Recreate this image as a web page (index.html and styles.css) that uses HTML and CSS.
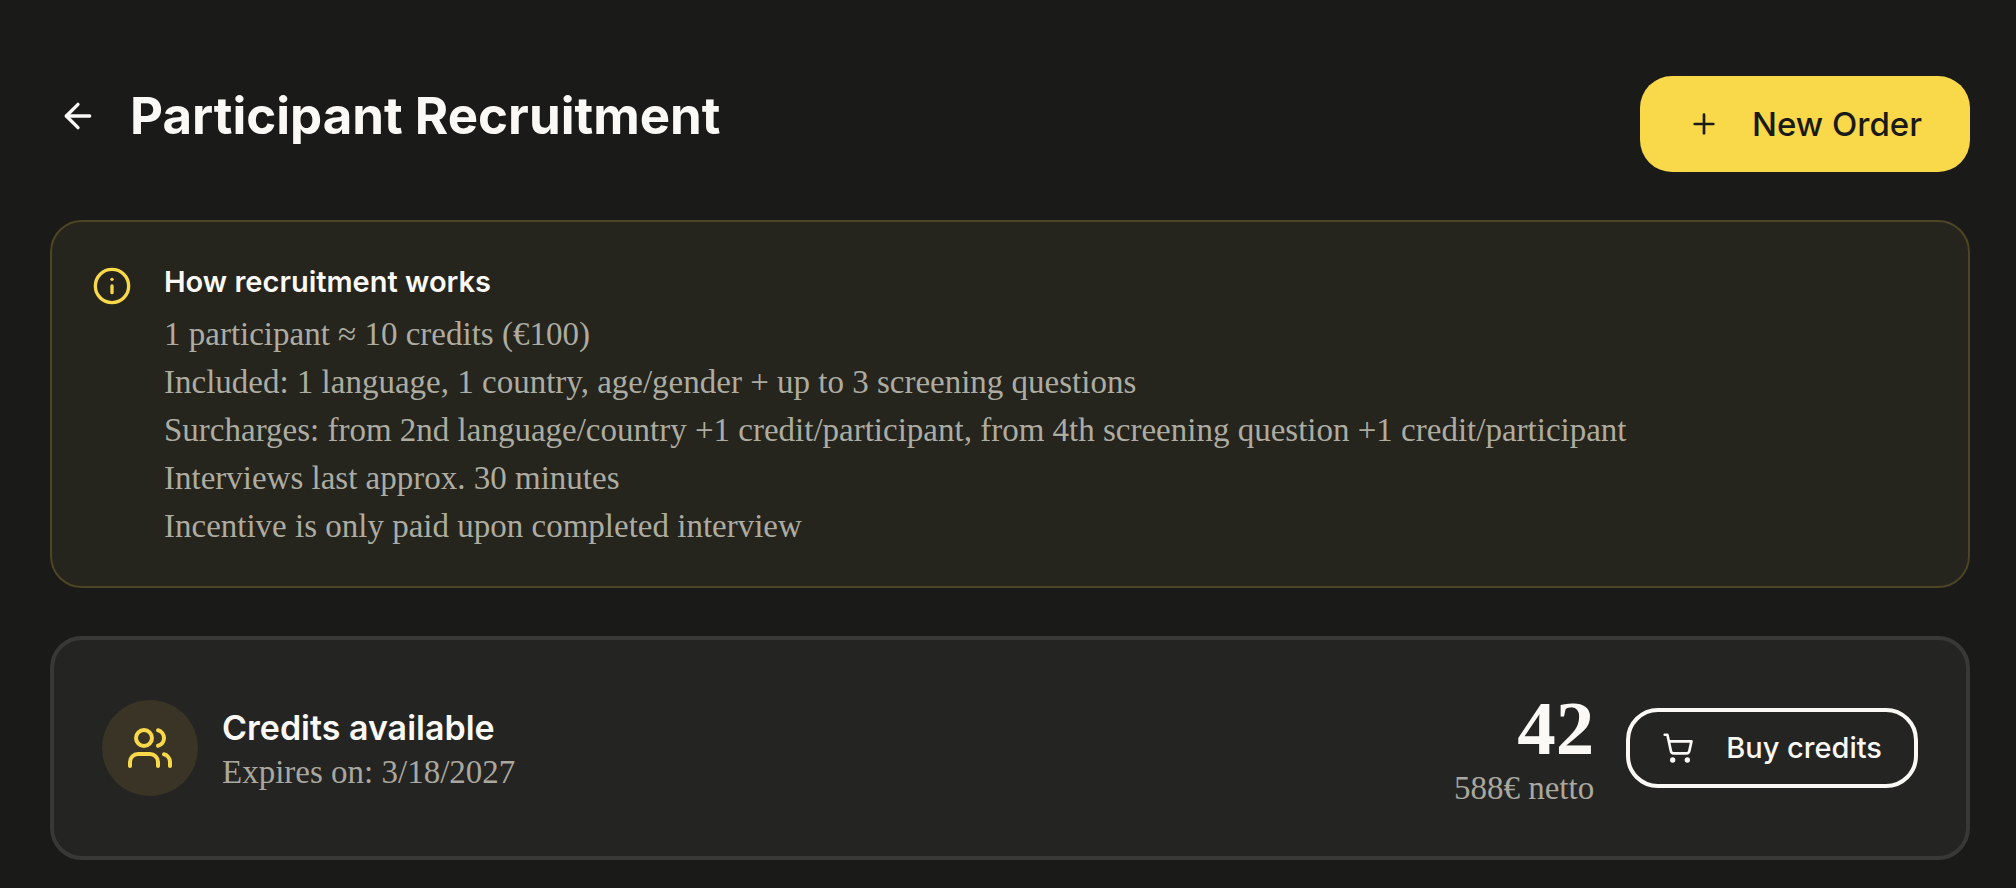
FILE: index.html
```html
<!DOCTYPE html>
<html lang="en">
<head>
<meta charset="utf-8">
<title>Participant Recruitment</title>
<link rel="stylesheet" href="styles.css">
</head>
<body>
<main class="page">
  <header class="page-header">
    <div class="page-heading">
      <button class="back-button" type="button" aria-label="Back">
        <svg class="icon icon-lg" viewBox="0 0 24 24" aria-hidden="true"><path d="m12 19-7-7 7-7"/><path d="M19 12H5"/></svg>
      </button>
      <h1 class="page-title">Participant Recruitment</h1>
    </div>
    <button class="button button-primary" type="button">
      <svg class="icon icon-md" viewBox="0 0 24 24" aria-hidden="true"><path d="M5 12h14"/><path d="M12 5v14"/></svg>
      New Order
    </button>
  </header>

  <section class="info-card">
    <svg class="icon icon-lg info-icon" viewBox="0 0 24 24" aria-hidden="true"><circle cx="12" cy="12" r="10"/><path d="M12 16v-4"/><path d="M12 8h.01"/></svg>
    <div class="info-body">
      <h2 class="info-title">How recruitment works</h2>
      <ul class="info-list">
        <li>1 participant ≈ 10 credits (€100)</li>
        <li>Included: 1 language, 1 country, age/gender + up to 3 screening questions</li>
        <li>Surcharges: from 2nd language/country +1 credit/participant, from 4th screening question +1 credit/participant</li>
        <li>Interviews last approx. 30 minutes</li>
        <li>Incentive is only paid upon completed interview</li>
      </ul>
    </div>
  </section>

  <section class="credits-card">
    <div class="credits-summary">
      <span class="credits-badge">
        <svg class="icon icon-xl" viewBox="0 0 24 24" aria-hidden="true"><path d="M16 21v-2a4 4 0 0 0-4-4H6a4 4 0 0 0-4 4v2"/><circle cx="9" cy="7" r="4"/><path d="M22 21v-2a4 4 0 0 0-3-3.87"/><path d="M16 3.13a4 4 0 0 1 0 7.75"/></svg>
      </span>
      <div>
        <h2 class="credits-title">Credits available</h2>
        <p class="credits-note">Expires on: 3/18/2027</p>
      </div>
    </div>
    <div class="credits-actions">
      <div class="credits-balance">
        <p class="credits-count">42</p>
        <p class="credits-note">588€ netto</p>
      </div>
      <button class="button button-outline" type="button">
        <svg class="icon icon-md" viewBox="0 0 24 24" aria-hidden="true"><circle cx="8" cy="21" r="1"/><circle cx="19" cy="21" r="1"/><path d="M2.05 2.05h2l2.66 12.42a2 2 0 0 0 2 1.58h9.78a2 2 0 0 0 1.95-1.57l1.65-7.43H5.12"/></svg>
        Buy credits
      </button>
    </div>
  </section>
</main>
</body>
</html>
```

FILE: styles.css
```css
:root {
  --bg: #1a1a18;
  --surface: #242422;
  --line: #383836;
  --text: #faf9f5;
  --muted: #a9a79f;
  --accent: #f9d84a;
  --sans: Inter, "Open Sans", sans-serif;
  --serif: "Liberation Serif", serif;
}

* {
  box-sizing: border-box;
}

body {
  margin: 0;
  background: var(--bg);
  color: var(--text);
  font-family: var(--serif);
}

h1, h2, p, ul {
  margin: 0;
  padding: 0;
}

.page {
  display: flex;
  flex-direction: column;
  gap: 48px;
  padding: 76px 46px 28px 50px;
}

.page-header {
  display: flex;
  justify-content: space-between;
  align-items: flex-start;
}

.page-heading {
  display: flex;
  align-items: center;
  gap: 24px;
}

.back-button {
  display: flex;
  padding: 8px;
  border: 0;
  background: none;
  color: inherit;
}

.page-title {
  font: 700 51px/80px var(--sans);
}

.icon {
  flex: none;
  fill: none;
  stroke: currentColor;
  stroke-width: 2;
  stroke-linecap: round;
  stroke-linejoin: round;
}

.icon-md {
  width: 32px;
  height: 32px;
}

.icon-lg {
  width: 40px;
  height: 40px;
}

.icon-xl {
  width: 48px;
  height: 48px;
}

.button {
  display: flex;
  align-items: center;
  gap: 32px;
  border: 0;
  border-radius: 32px;
  white-space: nowrap;
}

.button-primary {
  height: 96px;
  padding: 0 48px;
  background: var(--accent);
  color: #1a1a18;
  font: 500 33px/48px var(--sans);
}

.button-outline {
  height: 80px;
  padding: 0 32px;
  border: 4px solid var(--text);
  background: transparent;
  color: var(--text);
  font: 500 29px/40px var(--sans);
}

.info-card {
  display: flex;
  gap: 32px;
  padding: 40px 40px 36px;
  border: 2px solid #4d4524;
  border-radius: 32px;
  background: #25241d;
}

.info-icon {
  margin-top: 4px;
  color: var(--accent);
}

.info-title {
  margin-bottom: 8px;
  font: 600 29px/40px var(--sans);
}

.info-list {
  list-style: none;
  color: #adaca2;
  font-size: 33px;
  line-height: 48px;
}

.credits-card {
  display: flex;
  justify-content: space-between;
  align-items: center;
  padding: 48px;
  border: 4px solid var(--line);
  border-radius: 32px;
  background: var(--surface);
}

.credits-summary {
  display: flex;
  align-items: center;
  gap: 24px;
}

.credits-badge {
  display: flex;
  align-items: center;
  justify-content: center;
  width: 96px;
  height: 96px;
  border-radius: 50%;
  background: #393426;
  color: var(--accent);
}

.credits-title {
  font: 600 34px/48px var(--sans);
}

.credits-note {
  color: var(--muted);
  font-size: 33px;
  line-height: 40px;
}

.credits-actions {
  display: flex;
  align-items: center;
  gap: 32px;
}

.credits-balance {
  text-align: right;
}

.credits-count {
  font-size: 77px;
  font-weight: 700;
  line-height: 80px;
}
```
